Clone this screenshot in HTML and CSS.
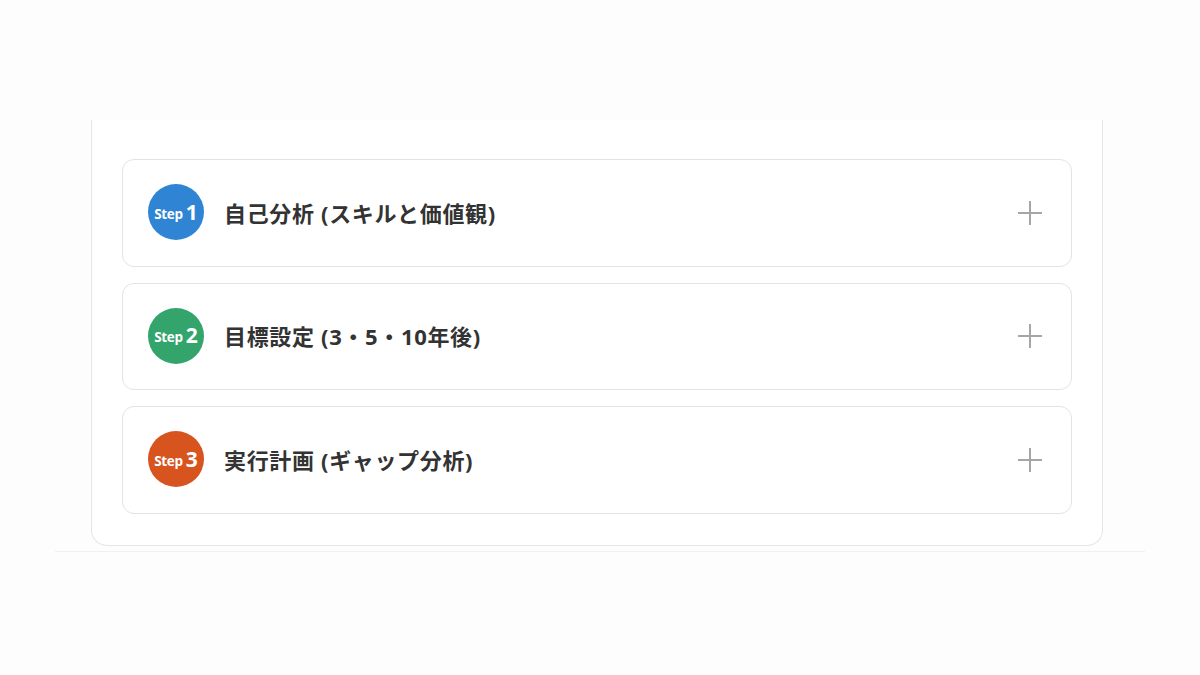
FILE: index.html
```html
<!DOCTYPE html>
<html lang="ja">
<head>
<meta charset="utf-8">
<title>キャリアプランの立て方</title>
<link rel="stylesheet" href="styles.css">
</head>
<body>
<main class="page">
  <section class="panel">
    <div class="steps">
      <div class="step">
        <div class="badge badge-blue"><span class="badge-label">Step</span><span class="badge-num">1</span></div>
        <h3 class="step-title">自己分析 (スキルと価値観)</h3>
        <span class="toggle" aria-hidden="true"></span>
      </div>
      <div class="step">
        <div class="badge badge-green"><span class="badge-label">Step</span><span class="badge-num">2</span></div>
        <h3 class="step-title">目標設定 (3・5・10年後)</h3>
        <span class="toggle" aria-hidden="true"></span>
      </div>
      <div class="step">
        <div class="badge badge-orange"><span class="badge-label">Step</span><span class="badge-num">3</span></div>
        <h3 class="step-title">実行計画 (ギャップ分析)</h3>
        <span class="toggle" aria-hidden="true"></span>
      </div>
    </div>
  </section>
  <hr class="divider">
</main>
</body>
</html>
```
FILE: styles.css
```css
* { box-sizing: border-box; }

html, body {
  margin: 0;
  padding: 0;
  background: #fdfdfd;
}

body {
  font-family: "Open Sans", "Noto Sans CJK JP", sans-serif;
  color: #333;
}

.page {
  width: 1200px;
  height: 675px;
  padding-top: 120px;
}

/* outer card, its top edge scrolled away */
.panel {
  width: 1012px;
  margin: 0 auto 0 91px;
  background: #fff;
  border: 1px solid #e6e6e6;
  border-top: none;
  border-radius: 0 0 16px 16px;
  padding: 39px 30px 31px;
}

.steps {
  display: flex;
  flex-direction: column;
  gap: 16px;
}

.step {
  display: flex;
  align-items: center;
  height: 107.5px;
  border: 1px solid #e3e3e3;
  border-radius: 12px;
  padding: 0 28px 0 25px;
  background: #fff;
}

.badge {
  flex: none;
  width: 56px;
  height: 56px;
  border-radius: 50%;
  display: flex;
  align-items: center;
  justify-content: center;
  gap: 3px;
  color: #fff;
  font-family: "Open Sans", sans-serif;
  font-weight: 700;
  margin-top: -1px;
}

.badge-label {
  font-size: 13.5px;
  letter-spacing: -0.3px;
  margin-top: 3px;
}

.badge-num {
  font-size: 21px;
  line-height: 1;
}

.badge-blue { background: #2f85d3; }
.badge-green { background: #33a46c; }
.badge-orange { background: #d8541f; }

.step-title {
  flex: 1;
  margin: -2px 0 0 20px;
  font-size: 22px;
  font-weight: 700;
  letter-spacing: 0.03em;
  color: #333;
}

.toggle {
  position: relative;
  flex: none;
  width: 24px;
  height: 24px;
  margin-right: 1px;
}

.toggle::before,
.toggle::after {
  content: "";
  position: absolute;
  background: #a6a6a6;
}

.toggle::before {
  left: 0;
  right: 0;
  top: 11px;
  height: 2px;
}

.toggle::after {
  top: 0;
  bottom: 0;
  left: 11px;
  width: 2px;
}

.divider {
  width: 1090px;
  margin: 5px 0 0 55px;
  border: none;
  border-top: 1px solid #f0f0f0;
}
```
